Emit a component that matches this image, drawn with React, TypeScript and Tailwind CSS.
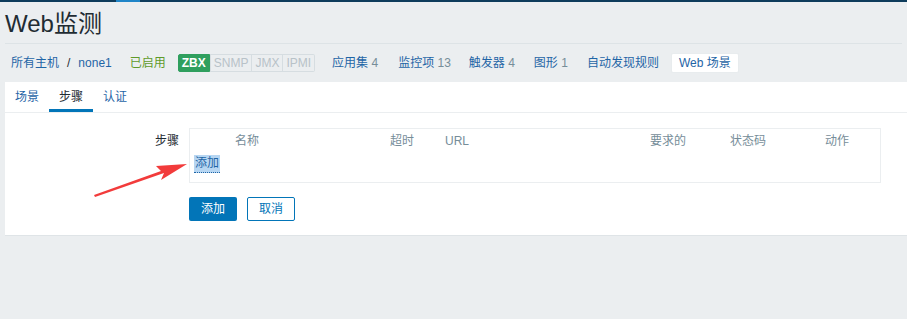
import React from 'react';

const font = { fontFamily: '"Liberation Sans", "Noto Sans CJK SC", Arial, sans-serif' };

export default function App() {
  return (
    <div className="relative w-[907px] h-[319px] bg-[#ebeef0] text-[12px] text-[#1f2c33] overflow-hidden" style={font}>
      {/* top bar */}
      <div className="h-[2px] bg-[#0e3c5c] flex">
        <div className="w-[116px]" />
        <div className="w-[24px] bg-[#1f85c8]" />
      </div>

      {/* header */}
      <div className="px-[5px]">
        <h1 className="h-[41px] flex items-center text-[24px] leading-none pt-[2px] text-[#1f2c33]">Web监测</h1>
        <div className="h-px bg-[#dde3e6]" />
      </div>

      {/* breadcrumb nav */}
      <div className="h-[38px] flex items-center pl-[11px] text-[#1f65a6]">
        <span>所有主机</span>
        <span className="mx-[8px] text-[#1f2c33]">/</span>
        <span>none1</span>
        <span className="ml-[18px] text-[#5f9a2a]">已启用</span>
        <div className="ml-[12px] flex h-[18px] leading-[16px]">
          <span className="px-[3px] bg-[#2f9f5e] text-white font-bold border border-[#2f9f5e] rounded-l-[2px]">ZBX</span>
          <span className="px-[3px] bg-[#ebeef0] text-[#b8c2c8] border border-[#d6dde1]">SNMP</span>
          <span className="px-[3px] bg-[#ebeef0] text-[#b8c2c8] border border-l-0 border-[#d6dde1]">JMX</span>
          <span className="px-[3px] bg-[#ebeef0] text-[#b8c2c8] border border-l-0 border-[#d6dde1] rounded-r-[2px]">IPMI</span>
        </div>
        <span className="ml-[17px]">应用集 <span className="text-[#768d99]">4</span></span>
        <span className="ml-[20px]">监控项 <span className="text-[#768d99]">13</span></span>
        <span className="ml-[18px]">触发器 <span className="text-[#768d99]">4</span></span>
        <span className="ml-[19px]">图形 <span className="text-[#768d99]">1</span></span>
        <span className="ml-[19px]">自动发现规则</span>
        <span className="ml-[12px] h-[20px] px-[7px] flex items-center bg-white rounded-[2px] border border-[#e8ecee]">Web 场景</span>
      </div>

      {/* main panel */}
      <div className="ml-[5px] bg-white border-b border-[#dfe4e7]">
        <div className="h-[31px] flex border-b border-[#ebeef0]">
          <div className="px-[10px] flex items-center text-[#1f65a6]">场景</div>
          <div className="px-[10px] flex items-center border-b-[3px] border-[#0275b8] pt-[3px] w-[44px]">步骤</div>
          <div className="px-[10px] flex items-center text-[#1f65a6]">认证</div>
        </div>

        <div className="pt-[15px] pb-[14px]">
          <div className="flex">
            <div className="w-[174px] text-right pt-[4px]">步骤</div>
            <div className="ml-[10px] w-[692px] h-[55px] border border-[#ebeef0] relative">
              <div className="flex h-[24px] items-center text-[#768d99]">
                <span className="ml-[45px] w-[155px]">名称</span>
                <span className="w-[55px]">超时</span>
                <span className="w-[205px]">URL</span>
                <span className="w-[80px]">要求的</span>
                <span className="w-[95px]">状态码</span>
                <span>动作</span>
              </div>
              <div className="pl-[4px] pt-[1px]">
                <span className="inline-block bg-[#b7d6f2] px-[1px] leading-[17px] text-[#1f65a6] border-b border-dotted border-[#1f65a6]">添加</span>
              </div>
            </div>
          </div>
          <div className="flex ml-[184px] mt-[14px] gap-[10px]">
            <button className="w-[48px] h-[24px] bg-[#0275b8] text-white rounded-[2px]">添加</button>
            <button className="w-[48px] h-[24px] bg-white text-[#0275b8] border border-[#0275b8] rounded-[2px]">取消</button>
          </div>
        </div>
      </div>

      {/* red annotation arrow */}
      <svg className="absolute left-[90px] top-[155px]" width="105" height="50" viewBox="0 0 105 50">
        <polygon points="5,42 74,18 71,25 97,9 66,11 71,16 4,40" fill="#f23b3b" />
      </svg>
    </div>
  );
}
